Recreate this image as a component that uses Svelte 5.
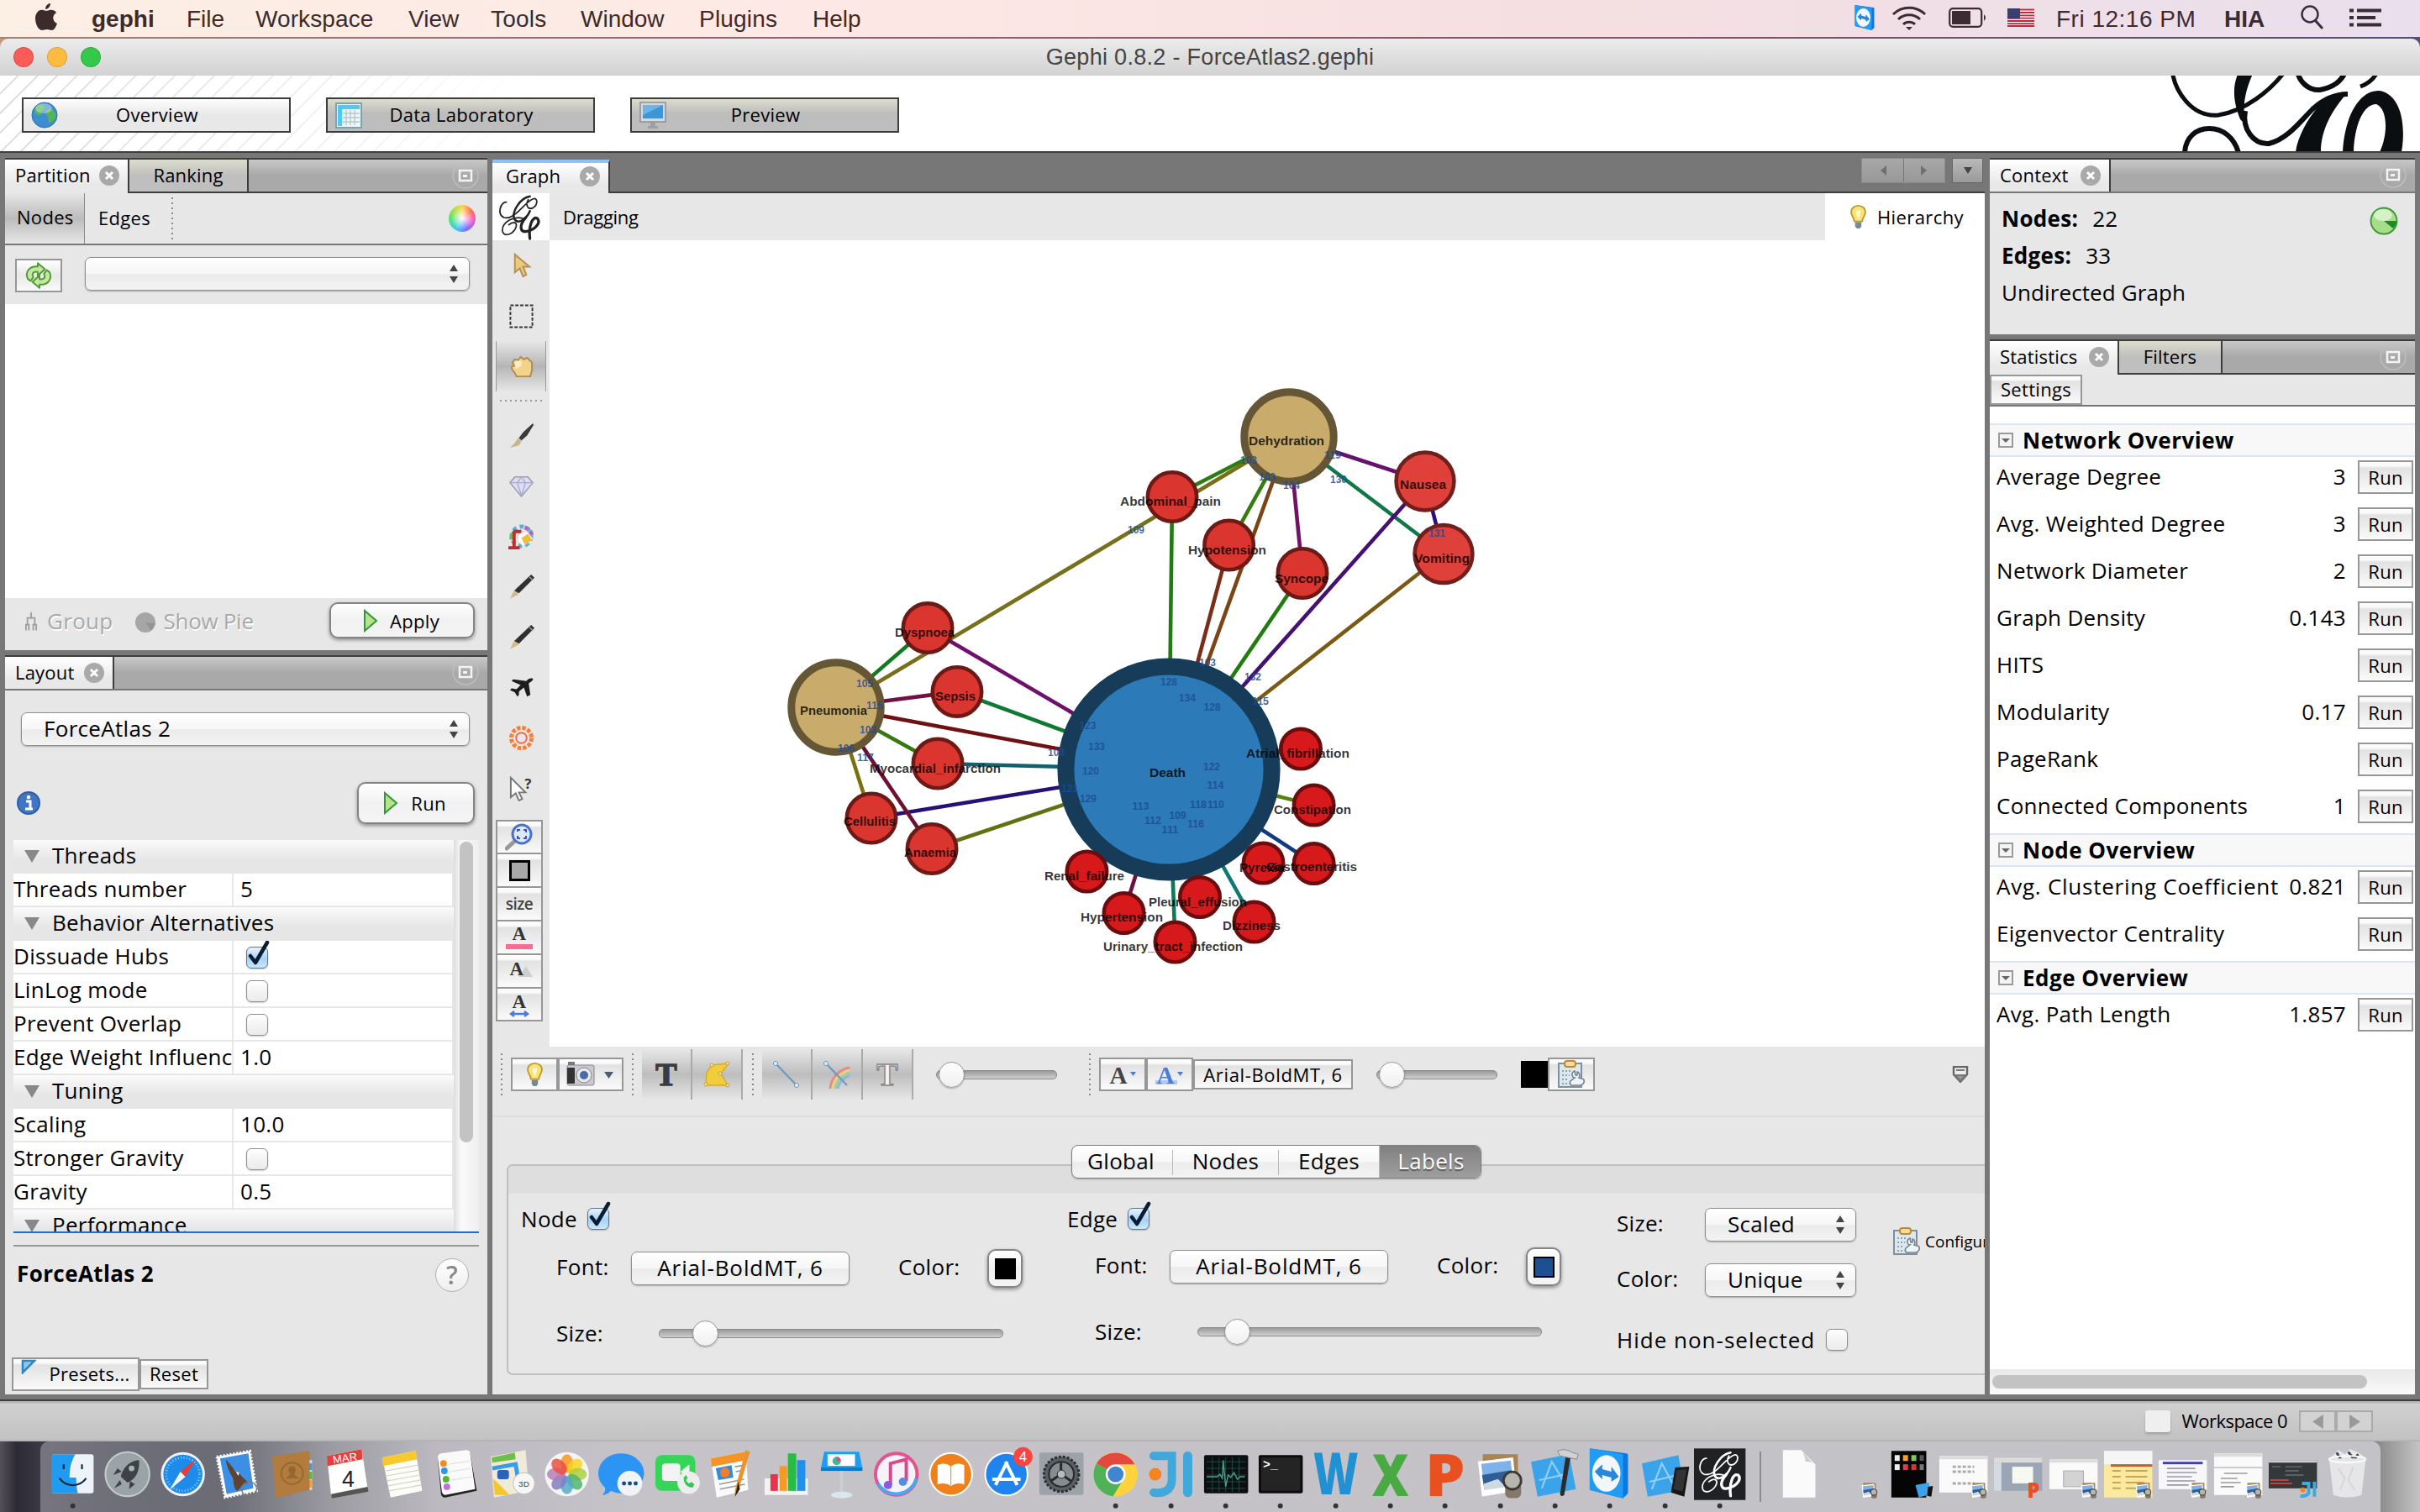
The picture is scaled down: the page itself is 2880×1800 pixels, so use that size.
<script>
  const menus = [
    ['File', 'm-file'], ['Workspace', 'm-ws'], ['View', 'm-view'], ['Tools', 'm-tools'],
    ['Window', 'm-win'], ['Plugins', 'm-plug'], ['Help', 'm-help']
  ];

  const props = [
    { head: 'Threads' },
    { name: 'Threads number', value: '5' },
    { head: 'Behavior Alternatives' },
    { name: 'Dissuade Hubs', check: true, on: true },
    { name: 'LinLog mode', check: true },
    { name: 'Prevent Overlap', check: true },
    { name: 'Edge Weight Influence', value: '1.0' },
    { head: 'Tuning' },
    { name: 'Scaling', value: '10.0' },
    { name: 'Stronger Gravity', check: true },
    { name: 'Gravity', value: '0.5' },
    { head: 'Performance' }
  ];

  const stats = [
    {
      title: 'Network Overview',
      rows: [
        ['Average Degree', '3'], ['Avg. Weighted Degree', '3'], ['Network Diameter', '2'],
        ['Graph Density', '0.143'], ['HITS', ''], ['Modularity', '0.17'],
        ['PageRank', ''], ['Connected Components', '1']
      ]
    },
    { title: 'Node Overview', rows: [['Avg. Clustering Coefficient', '0.821'], ['Eigenvector Centrality', '']] },
    { title: 'Edge Overview', rows: [['Avg. Path Length', '1.857']] }
  ];

  // kind, centre, outer radius, label text with its left/right extent and vertical middle
  const nodes = {
    death: ['blue', 1391, 916, 132.6, 'Death', 1368, 1411, 920],
    deh: ['tan', 1534, 520, 57.7, 'Dehydration', 1486, 1576, 525],
    pne: ['tan', 995, 842, 57.7, 'Pneumonia', 952, 1032, 846],
    nau: ['rose', 1696, 573, 36.7, 'Nausea', 1666, 1721, 577],
    vom: ['rose', 1718, 659.5, 36.7, 'Vomiting', 1683, 1749, 665],
    abd: ['red', 1395, 591.5, 31.5, 'Abdominal_pain', 1333, 1453, 597],
    hyp: ['red', 1462.6, 649, 31.5, 'Hypotension', 1414, 1507, 655],
    syn: ['red', 1550, 682.5, 31.5, 'Syncope', 1517, 1581, 689],
    dys: ['red', 1104, 747.6, 31.5, 'Dyspnoea', 1065, 1136, 753],
    sep: ['red', 1139, 823.4, 31.5, 'Sepsis', 1113, 1161, 829],
    myo: ['red', 1116, 909, 31.5, 'Myocardial_infarction', 1035, 1191, 915],
    cel: ['red', 1037, 974, 31.5, 'Cellulitis', 1004, 1066, 978],
    ana: ['red', 1109, 1010.5, 31.5, 'Anaemia', 1076, 1138, 1015],
    atr: ['deep', 1548, 891.5, 26, 'Atrial_fibrillation', 1483, 1606, 897],
    con: ['deep', 1563.6, 958.5, 26, 'Constipation', 1516, 1608, 964],
    pyr: ['deep', 1503.5, 1027.5, 26, 'Pyrexia', 1475, 1529, 1033],
    gas: ['deep', 1563.6, 1028, 26, 'Gastroenteritis', 1507, 1615, 1032],
    ren: ['deep', 1293.5, 1037.5, 26, 'Renal_failure', 1243, 1338, 1043],
    hpt: ['deep', 1337.5, 1087, 26, 'Hypertension', 1286, 1384, 1092],
    ple: ['deep', 1428, 1068, 26, 'Pleural_effusion', 1367, 1484, 1074],
    diz: ['deep', 1492.5, 1097.5, 26, 'Dizziness', 1455, 1524, 1102],
    uri: ['deep', 1398.5, 1121.5, 26, 'Urinary_tract_infection', 1313, 1479, 1127]
  };

  const edges = [
    ['abd', 'deh', '#2a7d12'], ['pne', 'deh', '#77701a'], ['abd', 'death', '#227a14'],
    ['hyp', 'deh', '#357d10'], ['deh', 'death', '#7a4414'], ['hyp', 'death', '#7a2c17'],
    ['syn', 'deh', '#6f1366'], ['syn', 'death', '#217c10'], ['deh', 'nau', '#66116f'],
    ['deh', 'vom', '#107848'], ['nau', 'vom', '#2c1080'], ['nau', 'death', '#461072'],
    ['vom', 'death', '#7a5a12'], ['pne', 'dys', '#127a20'], ['dys', 'death', '#6f106c'],
    ['pne', 'sep', '#701045'], ['sep', 'death', '#107a35'], ['pne', 'death', '#6f1012'],
    ['pne', 'myo', '#357a10'], ['myo', 'death', '#106070'], ['pne', 'cel', '#7a7010'],
    ['cel', 'death', '#241078'], ['pne', 'ana', '#701030'], ['ana', 'death', '#62700f'],
    ['con', 'death', '#57800f'], ['gas', 'death', '#123a80'], ['diz', 'death', '#107a70'],
    ['uri', 'death', '#107a55'], ['hpt', 'death', '#701040'], ['ren', 'death', '#127070'],
    ['ple', 'death', '#127070'], ['pyr', 'death', '#127070'], ['atr', 'death', '#127070']
  ];

  const weights = [
    ['103', 1486, 547], ['103', 1508, 567], ['104', 1537, 577], ['119', 1586, 541], ['130', 1593, 569.5],
    ['131', 1710, 634], ['109', 1352, 630], ['103', 1437, 788], ['132', 1491, 805], ['115', 1500, 834],
    ['105', 1029, 813], ['115', 1041, 839], ['103', 1033, 867.5], ['106', 1007, 889.5], ['117', 1030, 900.5],
    ['103', 1257, 894.5], ['128', 1391, 811], ['134', 1413, 830], ['128', 1442.5, 841], ['123', 1294.5, 863],
    ['133', 1305, 888], ['120', 1298, 917], ['129', 1295, 950], ['122', 1442, 911.5], ['114', 1446.5, 933.5],
    ['113', 1357.5, 959], ['118', 1426, 956.5], ['110', 1447, 956.5], ['109', 1401.5, 970], ['112', 1372, 976],
    ['116', 1423, 979.5], ['111', 1392.5, 987], ['121', 1273, 938]
  ];

  const apps = [
    'finder', 'launch', 'safari', 'mail', 'contacts', 'calendar', 'notes', 'reminders', 'maps', 'photos',
    'messages', 'facetime', 'pages', 'numbers', 'keynote', 'itunes', 'ibooks', 'appstore', 'prefs', 'chrome',
    'ji', 'activity', 'terminal', 'word', 'excel', 'ppt', 'preview', 'xcode', 'teamviewer', 'simulator', 'gephi'
  ];
  const running = new Set(['finder', 'chrome', 'ji', 'activity', 'terminal', 'word', 'excel', 'ppt', 'preview', 'xcode', 'teamviewer', 'simulator', 'gephi']);
  const shelf = ['doc', 'mini', 'black', 'win1', 'win2', 'win3', 'win4', 'win5', 'win6', 'win7', 'trash'];
  const petals = ['#f7941d', '#fbd31c', '#a9cf3a', '#4fb26b', '#4fa8c9', '#7d7fc0', '#b57ab8', '#ef4a3c'];
</script>

{#snippet logo(color)}
  <g fill="none" stroke={color} stroke-linecap="round">
    <path stroke-width="1.800" d="M14 12C7 11 2 27 11 31C24 35 36 12 47 8C53 6 53 15 47 19C41 22 37 16 41 9" />
    <path stroke-width="2.600" d="M43 5C31 7 20 24 24 33C28 40 39 33 43 23" />
    <path stroke-width="1.800" d="M37 33C24 27 9 37 9 47C10 55 20 53 25 45C29 37 23 35 17 40" />
    <path stroke-width="3.400" d="M38 31C29 41 31 50 39 48C50 46 57 37 52 32C46 29 41 42 43 57" />
  </g>
{/snippet}

{#snippet closeX()}
  <svg class="close" viewBox="0 0 24 24"><circle cx="12" cy="12" r="12" fill="#a9a9a9" /><path d="M8 8l8 8M16 8l-8 8" stroke="#fff" stroke-width="3" /></svg>
{/snippet}

{#snippet minimize()}
  <svg class="minimize" viewBox="0 0 34 34"><circle cx="17" cy="17" r="15" fill="none" stroke="#bdbdbd" stroke-width="1.5" /><rect x="10" y="11" width="14" height="12" fill="none" stroke="#f4f4f4" stroke-width="2.5" /><rect x="14" y="16" width="5" height="3" fill="#f4f4f4" /></svg>
{/snippet}

{#snippet arrows()}
  <svg class="arrows" viewBox="0 0 10 22"><path d="M0 8L5 0l5 8zM0 14h10l-5 8z" fill="#444" /></svg>
{/snippet}

{#snippet play()}
  <svg class="play" viewBox="0 0 18 28"><path d="M2 2v24L16 14z" fill="#b9e08a" stroke="#2f9a35" stroke-width="2" /></svg>
{/snippet}

{#snippet check(on)}
  <span class="check" class:on>
    {#if on}<svg viewBox="0 0 34 36"><path d="M7 19l6 8L27 3" fill="none" stroke="#0a1d33" stroke-width="4.5" stroke-linecap="round" stroke-linejoin="round" /></svg>{/if}
  </span>
{/snippet}

{#snippet bulb()}
  <svg class="bulb" viewBox="0 0 24 32"><path d="M12 2c-6 0-9 4-9 8 0 5 4 7 4 12h10c0-5 4-7 4-12 0-4-3-8-9-8z" fill="#f6e37a" stroke="#c09a30" stroke-width="2" /><path d="M9 8c0 6 2 8 3 12 1-4 3-6 3-12z" fill="#fff8c8" /><path d="M8 23h8v5l-2 3h-4l-2-3z" fill="#7d8794" /></svg>
{/snippet}

{#snippet clip()}
  <svg class="clip" viewBox="0 0 34 34"><rect x="2" y="4" width="27" height="28" fill="#dce8ef" stroke="#7f8f9b" stroke-width="2" /><rect x="9" y="1" width="13" height="7" rx="3" fill="#f7dca0" stroke="#c18a2c" stroke-width="2" /><path d="M6 13h12M6 18h9M6 23h7M6 28h6" stroke="#7a8b98" stroke-width="1.6" stroke-dasharray="2 2" /><path d="M21 13c-5 2-3 8 0 8l-5 4c-2 4 1 6 4 5h8c6-2 5-8 1-8l-3-1c2-3 0-7-2-7v4h-2z" fill="#f0f4f7" stroke="#75848f" stroke-width="1.6" /></svg>
{/snippet}

{#snippet globe()}
  <circle cx="17" cy="17" r="15" fill="#3b8ed0" stroke="#2b6fae" /><path d="M8 6c5-3 8-2 9 1s-4 4-4 8-5 2-7 0 0-7 2-9zM20 11c4-3 8 0 10 4s-2 10-6 11-2-6-4-8-3-5 0-7z" fill="#54b45c" /><ellipse cx="16" cy="9" rx="10" ry="6" fill="#fff" opacity=".35" />
{/snippet}

{#snippet photo(x, y, s)}
  <g transform="translate({x} {y}) scale({s})">
    <rect x="6" y="1" width="44" height="40" fill="#a98454" /><path d="M0 10L44 5l4 42L5 54z" fill="#fff" /><path d="M4 13l37-4 3 30L8 45z" fill="#7fb2e8" /><path d="M5 27l37-6 2 18L8 45z" fill="#2f5f96" /><path d="M7 38l18-6 10 10-27 4z" fill="#cfd9e0" />
    <rect x="34" y="36" width="20" height="20" rx="6" fill="#85786a" /><circle cx="43" cy="34" r="11" fill="#b8b4ae" stroke="#3c3a38" stroke-width="3" />
  </g>
{/snippet}

{#snippet teamviewer()}
  <path d="M8 6l44 6c2 0 2 2 2 4v44l-6 6L8 56z" fill="#0a78e0" /><path d="M8 6l40 7v53L8 56z" fill="#1e9cf6" /><ellipse cx="28" cy="36" rx="17" ry="22" fill="#f4f7fa" /><path d="M14 34l9-9v6l11 3v-6l9 12-9 6v-5l-11-3v5z" fill="#2a86d8" />
{/snippet}

<div class="screen">
  <header class="menubar">
    <svg class="apple" viewBox="0 0 26 32"><path d="M18 0c0 4-3 7-6 7 0-4 3-7 6-7zM13 9c2 0 4-2 7-1 2 0 4 1 5 3-6 4-4 11 1 13-2 5-4 8-6 8-3 0-4-1-6-1s-4 1-6 1C4 32 0 25 0 18 0 10 6 7 9 8c2 0 3 1 4 1z" fill="#3d2b2b" /></svg>
    <b class="m-gephi">gephi</b>
    {#each menus as [label, cls]}<span class={cls}>{label}</span>{/each}
    <span class="grow"></span>
    <svg class="tv" viewBox="4 4 52 64">{@render teamviewer()}</svg>
    <svg class="wifi" viewBox="0 0 42 30"><g fill="none" stroke="#3d2b33" stroke-width="3"><path d="M2 11a27 27 0 0 1 38 0M8 17a19 19 0 0 1 26 0M14 23a10 10 0 0 1 14 0" /></g><path d="M17 26h8l-4 4z" fill="#3d2b33" /></svg>
    <svg class="battery" viewBox="0 0 46 24"><rect x="1.2" y="1.2" width="38" height="21.6" rx="4" fill="none" stroke="#3d2b33" stroke-width="2.2" /><rect x="4" y="4" width="22" height="16" fill="#3d2b33" /><path d="M42 8q4 4 0 8z" fill="#3d2b33" /></svg>
    <svg class="flag" viewBox="0 0 32 22"><rect width="32" height="22" fill="#fff" /><path d="M0 1.5h32M0 5h32M0 8.3h32M0 11.6h32M0 15h32M0 18.2h32M0 21h32" stroke="#c0283a" stroke-width="1.8" /><rect width="15" height="12.5" fill="#39406f" /></svg>
    <span class="clock">Fri 12:16 PM</span>
    <b class="user">HIA</b>
    <svg class="find" viewBox="0 0 30 30"><circle cx="12" cy="11" r="9.5" fill="none" stroke="#3d2b33" stroke-width="2.4" /><path d="M18 18l9 10" stroke="#3d2b33" stroke-width="3" /></svg>
    <svg class="list" viewBox="0 0 38 22"><path d="M0 2.5h5M0 11h5M0 19.5h5M9 2.5h29M9 11h22M9 19.5h29" stroke="#3d2b33" stroke-width="4" /></svg>
  </header>

  <div class="titlewrap"><div class="titlebar">
    <div class="lights"><i class="r"></i><i class="y"></i><i class="g"></i></div>
    <span>Gephi 0.8.2 - ForceAtlas2.gephi</span>
  </div></div>

  <div class="banner">
    <button class="view current"><svg viewBox="0 0 34 34">{@render globe()}</svg><span>Overview</span></button>
    <button class="view"><svg viewBox="0 0 34 34"><rect x="2" y="3" width="30" height="29" fill="#eaf6f8" stroke="#7fa3a8" stroke-width="2" /><path d="M4 5h26v5H9v20H4z" fill="#4fc8f4" /><path d="M14 11v18M19 11v18M24 11v18M10 15h20M10 20h20M10 25h20" stroke="#b9c8cb" stroke-width="1.4" /></svg><span>Data Laboratory</span></button>
    <button class="view"><svg viewBox="0 0 34 34"><rect x="2" y="2" width="30" height="23" fill="#d6d9dd" stroke="#8a8f96" stroke-width="1.5" /><rect x="5" y="5" width="24" height="16" fill="#3f94d6" /><path d="M5 5h24L5 17z" fill="#6db4ea" /><path d="M14 26h6v4h3v3H11v-3h3z" fill="#9aa0a6" /></svg><span>Preview</span></button>
    <span class="grow"></span>
    <svg class="bigmark" viewBox="2576 90 304 90">
      <g fill="none" stroke="#0a0e10" stroke-width="6">
        <path d="M2585 84C2588 108 2608 140 2640 137C2672 132 2702 108 2720 84" stroke-width="5" />
        <path d="M2600 182C2601 163 2614 153 2629 153C2646 153 2659 164 2664 182" stroke-width="6" />
        <path d="M2734 84C2736 98 2748 108 2761 107C2776 104 2786 98 2792 84" stroke-width="6" />
        <path d="M2829 86Q2823 98 2809 103" stroke-width="5" />
        <path d="M2672 132C2668 154 2682 172 2700 171C2722 166 2738 144 2752 130C2764 119 2778 112 2794 112" stroke-width="6" />
      </g>
      <path d="M2664 86h18C2672 106 2668 128 2672 148L2666 142C2658 122 2656 104 2664 86zM2794 110C2774 132 2762 156 2762 181H2732C2734 164 2746 142 2758 128C2768 118 2780 112 2794 110z" fill="#0a0e10" />
      <path d="M2788 181C2790 142 2806 107 2832 108C2856 112 2864 146 2858 181H2832C2842 160 2842 130 2828 124C2812 124 2802 150 2801 181z" fill="#0a0e10" />
    </svg>
  </div>

  <main class="work">
    <div class="col left">
      <section class="panel p1">
        <div class="strip">
          <div class="tab active">Partition{@render closeX()}</div>
          <div class="tab rank">Ranking</div>
          <div class="fill">{@render minimize()}</div>
        </div>
        <div class="subtabs">
          <span class="sel">Nodes</span><span class="ed">Edges</span><i class="vdots"></i><span class="grow"></span><i class="wheel"></i>
        </div>
        <div class="pick">
          <button class="sq"><svg viewBox="0 0 32 32"><g fill="#c3e6a0" stroke="#4f9a33" stroke-width="1.800" stroke-linejoin="round"><path d="M4 20C0 12 6 5 15 6l0-4 8 7-8 7v-4c-5-1-7 2-5 6l-3 4z" /><path d="M28 12c4 8-2 15-11 14v4l-8-7 8-7v4c5 1 7-2 5-6l3-4z" /></g></svg></button>
          <div class="combo">{@render arrows()}</div>
        </div>
        <div class="blank"></div>
        <div class="foot">
          <svg class="tree" viewBox="0 0 16 26"><path d="M8 0v8M3 16V8h10v8M1 25v-8h4v8M11 25v-8h4v8" fill="none" stroke="#9c9c9c" stroke-width="2" /></svg>
          <span class="dis">Group</span>
          <svg class="piegray" viewBox="0 0 24 24"><circle cx="12" cy="12" r="12" fill="#a6a6a6" /><path d="M12 12l12 1-5 9z" fill="#949494" /></svg>
          <span class="dis pietext">Show Pie</span>
          <button class="mac apply">{@render play()}Apply</button>
        </div>
      </section>

      <section class="panel p2">
        <div class="strip plain">
          <div class="tab active">Layout{@render closeX()}</div>
          <div class="fill">{@render minimize()}</div>
        </div>
        <div class="combo algo"><span>ForceAtlas 2</span>{@render arrows()}</div>
        <div class="runrow">
          <svg class="info" viewBox="0 0 28 28"><circle cx="14" cy="14" r="13" fill="#3f77c4" stroke="#2b5da8" stroke-width="2" /><path d="M11 12h5v9M10 21h9" stroke="#fff" stroke-width="3" fill="none" /><circle cx="14" cy="7" r="2.2" fill="#fff" /></svg>
          <button class="mac run">{@render play()}Run</button>
        </div>
        <div class="props">
          <div class="table">
            {#each props as p}
              {#if p.head}
                <div class="phead"><i></i>{p.head}</div>
              {:else}
                <div class="prow"><span>{p.name}</span><span class="val">{#if p.check}{@render check(p.on)}{:else}{p.value}{/if}</span></div>
              {/if}
            {/each}
          </div>
          <div class="vscroll"><i></i></div>
        </div>
        <div class="desc"><b>ForceAtlas 2</b><span class="help">?</span></div>
        <div class="presets">
          <button class="flat pre"><svg viewBox="0 0 18 18"><path d="M2 2h14L2 16z" fill="#8ec7ec" stroke="#2a87c2" stroke-width="2.5" /></svg>Presets...</button>
          <button class="flat reset">Reset</button>
        </div>
      </section>
    </div>

    <section class="graph">
      <div class="gtabs">
        <div class="tab active gtab">Graph{@render closeX()}</div>
        <div class="gfill">
          <div class="nav"><i><svg viewBox="0 0 12 16"><path d="M10 2v12L3 8z" fill="#707070" /></svg></i><i><svg viewBox="0 0 12 16"><path d="M2 2v12l7-6z" fill="#707070" /></svg></i></div>
          <div class="drop"><svg viewBox="0 0 12 16"><path d="M1 4h10L6 12z" fill="#444" /></svg></div>
        </div>
      </div>
      <div class="modebar">
        <svg class="mark" viewBox="3 1 58 58">{@render logo('#222')}</svg>
        <span class="drag">Dragging</span>
        <span class="hier">{@render bulb()}Hierarchy</span>
      </div>
      <div class="stage">
        <div class="tools">
          <div class="tool"><svg viewBox="0 0 32 32"><path d="M8 2v22l6-5 4 10 4-2-4-10h8z" fill="#eecb7a" stroke="#b3905a" stroke-width="2" /></svg></div>
          <div class="tool"><svg viewBox="0 0 32 32"><rect x="2.5" y="2.5" width="27" height="27" fill="none" stroke="#333" stroke-width="2" stroke-dasharray="4 2" /></svg></div>
          <div class="tool held"><svg viewBox="0 0 32 32"><path d="M10 28C9 23 3 20 4 16l3-1-2-4 3-4 4 1 3-4 4 3 4-2 3 3 3 3v9l-2 8z" fill="#f1d489" stroke="#b08b55" stroke-width="2" /><path d="M8 9l8 0 0 6-7 4z" fill="#fdf3d4" opacity=".8" /></svg></div>
          <i class="hdots"></i>
          <div class="tool"><svg viewBox="0 0 32 32"><path d="M30 1L18 12l-6 8 3 3 8-7L31 3z" fill="#3a3a3a" /><path d="M12 19l4 4-3 5-11 3 5-5z" fill="#c9b587" /><path d="M12 20l3 3" stroke="#bbb" stroke-width="3" /></svg></div>
          <div class="tool"><svg viewBox="0 0 32 32"><path d="M8 5h16l6 7-14 17L2 12z" fill="#dcdcf3" stroke="#9c9cbb" stroke-width="1.6" /><path d="M2 12h28M11 12l5 16 5-16-5-7z" fill="none" stroke="#a9a9c8" stroke-width="1.4" /></svg></div>
          <div class="tool"><svg viewBox="0 0 32 32"><circle cx="16" cy="16" r="12" fill="none" stroke="#5bb0d8" stroke-width="5" stroke-dasharray="5 4" /><path d="M4 20a12 12 0 0 1 3-9" stroke="#5cc65c" stroke-width="5" fill="none" /><path d="M20 5a12 12 0 0 1 9 10" stroke="#b763c6" stroke-width="5" fill="none" stroke-dasharray="5 3" /><path d="M6 10h10M7 10v20M0 30h14" stroke="#c62a2a" stroke-width="4" /><path d="M12 14l10-5 8 10-12 9-7-7z" fill="#fff" stroke="#ccc" /><path d="M16 18l8-5 5 7-9 6z" fill="#ecbe3c" /></svg></div>
          <div class="tool"><svg viewBox="0 0 32 32"><path d="M28 1l4 4L13 24 7 21z" fill="#303030" /><path d="M7 20l6 5-11 6z" fill="#d2b98a" /><path d="M26 4l4 4" stroke="#999" stroke-width="1.5" /></svg></div>
          <div class="tool"><svg viewBox="0 0 32 32"><path d="M28 1l4 4L13 24 7 21z" fill="#303030" /><path d="M7 20l6 5-11 6z" fill="#d2b98a" /><path d="M26 4l4 4" stroke="#999" stroke-width="1.5" /></svg></div>
          <div class="tool"><svg viewBox="0 0 32 32"><path d="M30 5c-3-1-5 0-8 3L6 6 4 8l11 5-5 5-6-1-2 2 6 3 3 5 2-2v-4l6-5 4 11 4-2-2-14c4-3 6-4 5-6z" fill="#1c1c1c" /></svg></div>
          <div class="tool"><svg viewBox="0 0 32 32"><circle cx="16" cy="16" r="12.5" fill="none" stroke="#f2803a" stroke-width="5" stroke-dasharray="4.6 2" /><circle cx="16" cy="16" r="6.5" fill="none" stroke="#f2694a" stroke-width="2" /></svg></div>
          <div class="tool"><svg viewBox="0 0 32 32"><path d="M3 3v24l6-5 4 9 4-2-4-8h8z" fill="#fff" stroke="#777" stroke-width="2" /><text x="20" y="16" class="qm">?</text></svg></div>
          <div class="boxes">
            <button class="flat"><svg viewBox="0 0 34 34"><path d="M13 20L2 30" stroke="#999" stroke-width="5" stroke-linecap="round" /><circle cx="20" cy="13" r="11" fill="#dfe9fb" stroke="#4a74c9" stroke-width="3" /><path d="M15 10V8h3M22 8h3v3M25 15v3h-3M18 18h-3v-3" stroke="#3358b5" stroke-width="2" fill="none" /></svg></button>
            <button class="flat"><i class="swatchg"></i></button>
            <button class="flat"><span class="sizeb">size</span></button>
            <button class="flat"><svg viewBox="0 0 34 34"><text x="17" y="20" text-anchor="middle" class="serifA">A</text><rect x="1" y="25" width="32" height="6" fill="#fb6b93" /></svg></button>
            <button class="flat"><svg viewBox="0 0 34 34"><path d="M16 24l9-13 8 13z" fill="#cfcfcf" /><text x="14" y="22" text-anchor="middle" class="serifA">A</text></svg></button>
            <button class="flat"><svg viewBox="0 0 34 34"><text x="17" y="21" text-anchor="middle" class="serifA">A</text><path d="M8 28h18M11 25l-4 3 4 3M23 25l4 3-4 3" stroke="#4b7cd6" stroke-width="2.4" fill="none" /></svg></button>
          </div>
        </div>
        <svg class="canvas" viewBox="654 286 1708 960">
          {#each edges as [a, b, color]}
            <line x1={nodes[a][1]} y1={nodes[a][2]} x2={nodes[b][1]} y2={nodes[b][2]} stroke={color} stroke-width="4.6" />
          {/each}
          {#each Object.values(nodes) as [kind, x, y, r]}
            <circle class={kind} cx={x} cy={y} r={kind === 'blue' ? r - 10 : kind === 'tan' ? r - 4.5 : r - 2.3} />
          {/each}
          {#each weights as [t, x, y]}
            <text class="weight" x={x - 10} y={y + 5} textLength="20" lengthAdjust="spacingAndGlyphs">{t}</text>
          {/each}
          {#each Object.values(nodes) as [, , , , t, x1, x2, y]}
            <text class="label" x={x1} y={y + 5} textLength={x2 - x1} lengthAdjust="spacingAndGlyphs">{t}</text>
          {/each}
        </svg>
      </div>

      <div class="bottombar">
        <i class="vdots d1"></i>
        <button class="flat b56">{@render bulb()}</button>
        <button class="flat cam"><svg viewBox="0 0 60 34"><rect x="2" y="6" width="32" height="24" rx="2" fill="#c8cad0" stroke="#85888f" /><rect x="2" y="9" width="9" height="19" fill="#333" /><rect x="3" y="2" width="8" height="4" fill="#777" /><circle cx="22" cy="18" r="9" fill="#e6e8ee" stroke="#888" /><circle cx="22" cy="18" r="5" fill="#4a6aa8" /><path d="M46 14h11l-5.500 8z" fill="#4a5c70" /></svg></button>
        <i class="vdots d2"></i>
        <span class="tog"><svg viewBox="0 0 34 34"><text x="17" y="30" text-anchor="middle" class="bigT dark">T</text></svg></span>
        <span class="tog"><svg viewBox="0 0 34 34"><path d="M11 6l20-2-9 12 8 14H4l1-15z" fill="#f1cd3d" stroke="#d3ab36" stroke-width="1.5" /><g fill="#fbe9a0" stroke="#c99c2b"><circle cx="11" cy="6" r="2" /><circle cx="30" cy="4" r="2" /><circle cx="4" cy="29" r="2" /><circle cx="30" cy="30" r="2" /><circle cx="21" cy="16" r="2" /></g></svg></span>
        <i class="vdots d3"></i>
        <span class="tog"><svg viewBox="0 0 34 34"><path d="M4 4l25 26" stroke="#6f9cc0" stroke-width="2.4" /><circle cx="4" cy="4" r="2.600" fill="#dcecf6" stroke="#6f9cc0" /><circle cx="29" cy="30" r="2.600" fill="#dcecf6" stroke="#6f9cc0" /></svg></span>
        <span class="tog"><svg viewBox="0 0 34 34"><g fill="none" stroke-width="3"><path d="M9 34C10 22 18 12 32 9" stroke="#e58a86" /><path d="M12 34C13 24 20 16 32 12" stroke="#ecd08a" /><path d="M15 34C16 26 22 19 32 15" stroke="#a0cf9a" /><path d="M18 34C19 28 24 22 32 18" stroke="#8cb5e0" /></g><path d="M4 4l25 26" stroke="#6f9cc0" stroke-width="2.4" /><circle cx="4" cy="4" r="2.600" fill="#dcecf6" stroke="#6f9cc0" /></svg></span>
        <span class="tog"><svg viewBox="0 0 34 34"><text x="17" y="30" text-anchor="middle" class="bigT light">T</text></svg></span>
        <div class="slider s1"><i></i></div>
        <i class="vdots d4"></i>
        <button class="flat b56"><svg viewBox="0 0 40 34"><text x="15" y="28" text-anchor="middle" class="dropA">A</text><path d="M29 14h7l-3.500 5z" fill="#4b7cd6" /></svg></button>
        <button class="flat b56"><svg viewBox="0 0 40 34"><rect x="3" y="24" width="26" height="5" fill="#b3c8f0" /><text x="15" y="28" text-anchor="middle" class="dropA blue2">A</text><path d="M29 14h7l-3.500 5z" fill="#4b7cd6" /></svg></button>
        <button class="flat fontb">Arial-BoldMT, 6</button>
        <div class="slider s2"><i></i></div>
        <i class="black"></i>
        <button class="flat b56">{@render clip()}</button>
        <span class="grow"></span>
        <svg class="pen" viewBox="0 0 20 20"><path d="M2 1h16v9l-8 9-8-9z" fill="#eee" stroke="#666" stroke-width="2.4" /><path d="M5 5h10M4 11h12l-6 7z" stroke="#777" stroke-width="2" fill="#999" /></svg>
      </div>

      <div class="labels">
        <div class="seg"><span>Global</span><span>Nodes</span><span>Edges</span><span class="on">Labels</span></div>
        <div class="group">
          <div class="half node">
            <div class="toggle">Node{@render check(true)}</div>
            <div class="frow"><span class="k">Font:</span><button class="mac2">Arial-BoldMT, 6</button><span class="k2">Color:</span><button class="mac sw"><i></i></button></div>
            <div class="srow"><span class="k">Size:</span><div class="slider long"><i></i></div></div>
          </div>
          <div class="half edge">
            <div class="toggle">Edge{@render check(true)}</div>
            <div class="frow"><span class="k">Font:</span><button class="mac2">Arial-BoldMT, 6</button><span class="k2">Color:</span><button class="mac sw"><i class="navy"></i></button></div>
            <div class="srow"><span class="k">Size:</span><div class="slider long lo2"><i></i></div></div>
          </div>
          <div class="opts">
            <div class="orow"><span>Size:</span><div class="combo sm"><span>Scaled</span>{@render arrows()}</div></div>
            <div class="orow o2"><span>Color:</span><div class="combo sm"><span>Unique</span>{@render arrows()}</div></div>
            <div class="hide">Hide non-selected{@render check(false)}</div>
          </div>
          <div class="conf">{@render clip()}<span>Configure</span></div>
        </div>
      </div>
    </section>

    <div class="col right">
      <section class="panel p3">
        <div class="strip plain">
          <div class="tab active ctx">Context{@render closeX()}</div>
          <div class="fill">{@render minimize()}</div>
        </div>
        <div class="context">
          <dl>
            <div><dt>Nodes:</dt><dd>22</dd></div>
            <div><dt>Edges:</dt><dd>33</dd></div>
            <div>Undirected Graph</div>
          </dl>
          <svg class="pie" viewBox="0 0 34 34"><circle cx="17" cy="17" r="15.500" fill="#a7dd8b" stroke="#3f9a35" stroke-width="2" /><ellipse cx="16" cy="10" rx="11" ry="7" fill="#e2f6d6" opacity=".8" /><path d="M17 17h15c0 4-2 7-4 9z" fill="#1f8a26" /></svg>
        </div>
      </section>
      <section class="panel p4">
        <div class="strip">
          <div class="tab active st">Statistics{@render closeX()}</div>
          <div class="tab filt">Filters</div>
          <div class="fill">{@render minimize()}</div>
        </div>
        <div class="setrow"><button class="flat">Settings</button></div>
        <div class="stats">
          {#each stats as s}
            <div class="shead"><svg viewBox="0 0 18 18"><rect x="1" y="1" width="16" height="16" fill="#f4f4f4" stroke="#9a9a9a" stroke-width="2" /><path d="M4 7h10l-5 5z" fill="#666" /></svg>{s.title}</div>
            <div class="slist">
              {#each s.rows as [name, value]}
                <div class="srow2"><span class:wide={name.length > 24}>{name}</span><span class="v">{value}</span><button class="flat">Run</button></div>
              {/each}
            </div>
          {/each}
        </div>
        <div class="hscroll"><i></i></div>
      </section>
    </div>
  </main>

  <footer class="status">
    <i class="sheet"></i><span>Workspace 0</span>
    <div class="wnav"><i><svg viewBox="0 0 12 16"><path d="M12 0v16L0 8z" fill="#999" /></svg></i><i><svg viewBox="0 0 12 16"><path d="M0 0v16l12-8z" fill="#999" /></svg></i></div>
  </footer>

  <div class="desktop">
    <div class="dock">
      {#each apps as a}
        <svg class="app" viewBox="0 0 66 84">
          {#if a === 'finder'}
            <rect x="8" y="15" width="50" height="47" rx="3" fill="#eef3f9" /><path d="M11 15h25c-6 10-7 20-7 28h8c0 8 1 14 2 19H11q-3 0-3-3V18q0-3 3-3z" fill="#1f9bf2" /><path d="M22 27v6M44 27v6M17 44c8 11 24 11 32 0" fill="none" stroke="#12263d" stroke-width="2.200" />
          {:else if a === 'launch'}
            <circle cx="33" cy="39" r="26.500" fill="#9aa4a6" stroke="#c6cdcf" stroke-width="2" /><path d="M47 22c-14 1-20 12-22 20l8 7c10-4 15-14 14-27zM26 36l-10 4 5-8zM36 47l-1 10 7-6zM24 46l-7 10 9-5z" fill="#3c4245" /><circle cx="38" cy="32" r="3.500" fill="#a9b2b4" />
          {:else if a === 'safari'}
            <circle cx="33" cy="39" r="26.500" fill="#eef2f5" /><circle cx="33" cy="39" r="23.500" fill="#1c8bea" /><circle cx="33" cy="39" r="20" fill="none" stroke="#8fd0fa" stroke-width="3" stroke-dasharray="1 2.500" /><path d="M49 20L30 36l6 6z" fill="#ea3b3b" /><path d="M17 58l19-16-6-6z" fill="#f4f4f4" />
          {:else if a === 'mail'}
            <path d="M8 18l40-7 8 48-38 8z" fill="#fff" stroke="#fff" stroke-width="3" stroke-dasharray="2 2" /><path d="M12 20l34-6 6 42-32 7z" fill="#3d8fe3" /><path d="M19 21c5 6 9 10 11 15l4 1c3 3 6 7 12 12l-5 2c-4 1-5 7-9 8-3-3-4-9-4-14-4-8-8-14-9-24z" fill="#5c4333" /><path d="M31 36l4 1-1 4z" fill="#fff" /><circle cx="47" cy="57" r="9" fill="none" stroke="#777" stroke-width="1.500" />
          {:else if a === 'contacts'}
            <rect x="46" y="22" width="11" height="36" fill="#d9d9d9" /><path d="M50 26h7v8h-7z" fill="#3a9be8" /><path d="M50 36h7v9h-7z" fill="#4dbf52" /><path d="M50 46h7v9h-7z" fill="#f2a33a" /><path d="M9 18l42-7q3 0 3 3v44l-38 9q-3 0-3-4z" fill="#b27c3e" /><circle cx="33" cy="38" r="13" fill="none" stroke="#966831" stroke-width="2" /><path d="M33 29c6 0 5 8 2 10l6 5H25l6-5c-3-2-4-10 2-10z" fill="#966831" />
          {:else if a === 'calendar'}
            <path d="M8 18l42-8 8 50-44 8z" fill="#555" /><path d="M8 17l42-8 7 45-44 9z" fill="#fff" /><path d="M8 17l42-8 1 12-42 8z" fill="#e2403c" /><text x="30" y="24" text-anchor="middle" class="mar" transform="rotate(-8 30 20)">MAR</text><text x="34" y="54" text-anchor="middle" class="four">4</text>
          {:else if a === 'notes'}
            <path d="M9 19l40-8 8 48-38 8z" fill="#fdfdfa" /><path d="M9 19l40-8 2 10-41 8z" fill="#f8c92c" /><path d="M13 35l39-7M14 41l39-7M15 47l39-7M16 53l39-7M17 59l39-7" stroke="#d6d3c8" stroke-width="1.200" />
          {:else if a === 'reminders'}
            <path d="M10 20q0-4 4-5l30-4q5 0 5 4l8 44-38 8q-4 0-5-4z" fill="#222" /><path d="M10 19q0-4 4-5l30-4q5 0 5 4l6 43-36 7q-3 0-4-4z" fill="#fafafa" /><circle cx="17" cy="26" r="4" fill="#f58a20" /><circle cx="18" cy="35" r="4" fill="#2b98ee" /><circle cx="20" cy="45" r="4" fill="#52b82e" /><circle cx="21" cy="54" r="4" fill="#c26de0" /><path d="M24 27l24-4M25 36l24-4M27 46l24-4" stroke="#ddd" />
          {:else if a === 'maps'}
            <path d="M7 18l42-8 4 49-42 8z" fill="#f0ead9" /><path d="M8 19l28-6 1 8-28 4z" fill="#6fbf4b" /><path d="M9 32l28-5 5 30" fill="none" stroke="#3b9be8" stroke-width="5" /><path d="M10 44l20 20h-18z" fill="#f6c62e" /><rect x="15" y="34" width="14" height="11" rx="3" fill="#2c62b8" /><circle cx="47" cy="50" r="13" fill="#f7f7f7" stroke="#bbb" /><text x="47" y="54" text-anchor="middle" class="tiny">3D</text>
          {:else if a === 'photos'}
            <circle cx="33" cy="39" r="26.500" fill="#f5f5f5" />{#each petals as c, i}<ellipse cx="33" cy="26" rx="7.500" ry="11" fill={c} opacity=".82" transform="rotate({i * 45} 33 39)" />{/each}
          {:else if a === 'messages'}
            <path d="M32 14a27 24 0 1 1-12 45c-2 3-6 5-10 5 3-3 4-6 3-9A27 24 0 0 1 32 14z" fill="#2b94f5" /><circle cx="43" cy="50" r="15" fill="#f0f4f8" /><g fill="#1b4c80"><circle cx="36" cy="50" r="2.500" /><circle cx="43" cy="50" r="2.500" /><circle cx="50" cy="50" r="2.500" /></g>
          {:else if a === 'facetime'}
            <rect x="7" y="16" width="48" height="43" rx="8" fill="#35d657" /><rect x="15" y="26" width="22" height="21" rx="4" fill="#f3f3f3" /><path d="M37 36l11-9v20z" fill="#f3f3f3" /><circle cx="47" cy="49" r="13.500" fill="#eee" /><path d="M41 43c0 8 5 12 11 12l2-4-4-3-2 2c-3-1-4-3-4-5l2-1-2-4z" fill="#35c653" />
          {:else if a === 'pages'}
            <path d="M8 20l42-8 3 46-38 9z" fill="#fbfbfb" /><path d="M8 20l42-8 1 10-42 8z" fill="#f59327" /><path d="M14 32l19-4 2 15-18 3z" fill="#2f8bdc" /><circle cx="25" cy="37" r="6" fill="#ee7d34" /><path d="M37 30l12-2M38 36l11-2M18 51l30-6M19 57l30-6" stroke="#999" stroke-width="1.600" /><path d="M50 10l5 2-14 48-4 6 0-8z" fill="#e8942f" /><path d="M41 48l-4 18 6-9z" fill="#222" />
          {:else if a === 'numbers'}
            <path d="M7 44h52v20H7z" fill="#f3f3f3" /><rect x="14" y="39" width="9" height="20" fill="#e8344c" /><rect x="25" y="29" width="9" height="30" fill="#f59a26" /><rect x="35" y="14" width="10" height="45" fill="#27bd45" /><rect x="46" y="22" width="10" height="37" fill="#1f8ff0" />
          {:else if a === 'keynote'}
            <path d="M12 12h42l4 20H8z" fill="#1f9df0" /><rect x="16" y="15" width="33" height="14" fill="#fafafa" /><circle cx="27" cy="23" r="5" fill="#39bd8d" /><path d="M27 23v-5a5 5 0 0 1 5 5z" fill="#e5438a" /><rect x="8" y="31" width="50" height="4" fill="#0c7ac6" /><rect x="31" y="35" width="3.500" height="26" fill="#c8d0d6" /><ellipse cx="33" cy="64" rx="13" ry="4" fill="#d9e6ee" />
          {:else if a === 'itunes'}
            <circle cx="33" cy="39" r="25" fill="#f5f3f7" stroke="#e3538f" stroke-width="4" /><path d="M11 50A25 25 0 0 0 57 44" fill="none" stroke="#49a8f0" stroke-width="4" /><path d="M26 52V26l19-5v26" fill="none" stroke="#d9488c" stroke-width="4" /><circle cx="23" cy="52" r="5" fill="#8a5be0" /><circle cx="41" cy="48" r="5" fill="#5b8be0" />
          {:else if a === 'ibooks'}
            <circle cx="33" cy="39" r="26.500" fill="#fff" /><circle cx="33" cy="39" r="24.500" fill="#f0801c" /><path d="M33 30c-5-5-11-4-16-2v23c6-2 12-1 16 2 4-3 10-4 16-2V28c-5-2-11-3-16 2z" fill="#fff" /><path d="M33 30v22" stroke="#f0801c" />
          {:else if a === 'appstore'}
            <circle cx="33" cy="39" r="26.500" fill="#fff" /><circle cx="33" cy="39" r="24.500" fill="#1f84ee" /><path d="M34 24L20 52M32 24l14 28M16 45h34" stroke="#fff" stroke-width="4" fill="none" /><circle cx="53" cy="18" r="11.500" fill="#f8453f" /><text x="53" y="24" text-anchor="middle" class="badge">4</text>
          {:else if a === 'prefs'}
            <rect x="7" y="13" width="53" height="51" rx="2" fill="#9ba2a8" /><circle cx="33.500" cy="39" r="21" fill="#5b5f63" stroke="#2b2d2f" stroke-width="3" stroke-dasharray="3 2" /><circle cx="33.500" cy="39" r="15" fill="#878c90" stroke="#26282a" stroke-width="2" /><path d="M33 39V25M33 39l12 8M33 39l-12 8" stroke="#26282a" stroke-width="3" /><circle cx="33.500" cy="39" r="5" fill="#b7bbbe" stroke="#26282a" />
          {:else if a === 'chrome'}
            <circle cx="33" cy="39" r="26.500" fill="#ffd23e" /><path d="M33 39L10 26A26.500 26.500 0 0 1 56 27H33z" fill="#e24a3d" /><path d="M33 39L10 26a26.500 26.500 0 0 0 20 39.500l12-20z" fill="#4fb257" /><circle cx="33" cy="39" r="12" fill="#fff" /><circle cx="33" cy="39" r="9.500" fill="#3f86cf" />
          {:else if a === 'ji'}
            <path d="M12 17h22v28c0 14-11 18-22 16" fill="none" stroke="#41a8dc" stroke-width="10" stroke-linecap="round" /><path d="M53 17v44" stroke="#41a8dc" stroke-width="11" stroke-linecap="round" /><circle cx="14" cy="39" r="7.500" fill="#f58321" />
          {:else if a === 'activity'}
            <rect x="7" y="16" width="53" height="46" rx="2" fill="#0c0f0f" /><path d="M10 24h47M10 32h47M10 40h47M10 48h47M10 56h47M17 19v41M25 19v41M33 19v41M41 19v41M49 19v41" stroke="#1f4a42" stroke-width="1" /><path d="M10 42h13l3-3 3 5 1-22 3 32 3-14 3 3 4-6 4 8 3-3h6" fill="none" stroke="#4aa08d" stroke-width="1.400" />
          {:else if a === 'terminal'}
            <rect x="7" y="16" width="53" height="46" rx="2" fill="#0b0b0b" /><rect x="10" y="19" width="47" height="40" fill="#242424" /><text x="12" y="32" class="prompt">&gt;_</text>
          {:else if a === 'word'}
            <text x="6" y="63" class="office w" textLength="54" lengthAdjust="spacingAndGlyphs">W</text>
          {:else if a === 'excel'}
            <text x="11" y="65" class="office x" textLength="44" lengthAdjust="spacingAndGlyphs">X</text>
          {:else if a === 'ppt'}
            <text x="9" y="65" class="office p" textLength="48" lengthAdjust="spacingAndGlyphs">P</text>
          {:else if a === 'preview'}
            {@render photo(6, 14, 0.96)}
          {:else if a === 'xcode'}
            <path d="M4 24l46-9 8 42-46 9z" fill="#3ba3ea" /><path d="M17 56l12-32 16 26M14 46l32-7" stroke="#8fd0fa" stroke-width="2.200" fill="none" /><path d="M46 16h6l-8 48q-4 3-5-1z" fill="#2b2b2b" /><path d="M36 11q9-4 18 2l7 2-2 6-20-4z" fill="#cfd3d6" stroke="#888" />
          {:else if a === 'teamviewer'}
            <g transform="translate(1 2)">{@render teamviewer()}</g>
          {:else if a === 'simulator'}
            <path d="M5 26l44-10 7 42-44 8z" fill="#3ba3ea" /><path d="M17 57l12-31 14 26M14 48l30-7" stroke="#8fd0fa" stroke-width="2.200" fill="none" /><path d="M45 31l17-1-6 36-16-5z" fill="#161616" /><path d="M47 34l12-1-5 27-11-3z" fill="#333" />
          {:else}
            <rect x="2" y="8" width="62" height="62" fill="#1f2123" /><g transform="translate(3 8)">{@render logo('#fff')}</g>
          {/if}
          {#if running.has(a)}<circle cx="33" cy="77" r="3" class="dot" />{/if}
        </svg>
      {/each}
      <i class="divider"></i>
      {#each shelf as s}
        <svg class="app" viewBox="0 0 66 84">
          {#if s === 'doc'}
            <path d="M14 10h22l17 17v40H14z" fill="#fafafa" /><path d="M36 10q4 4 5 14 8-1 12 5z" fill="#cfcfcf" />
          {:else if s === 'mini'}
            {@render photo(42, 49, 0.34)}
          {:else if s === 'black'}
            <rect x="12" y="11" width="42" height="56" fill="#050505" /><g fill="#eee"><rect x="16" y="16" width="6" height="7" /><rect x="26" y="16" width="6" height="7" fill="#f5a02b" /><rect x="36" y="16" width="6" height="7" fill="#7bc86a" /><rect x="46" y="16" width="5" height="7" fill="#555" /><rect x="16" y="27" width="6" height="7" /><rect x="26" y="27" width="6" height="7" fill="#e5394b" /><rect x="36" y="27" width="6" height="7" fill="#d33" /><rect x="46" y="27" width="5" height="7" fill="#777" /></g><path d="M41 52l16-3 3 14-15 4z" fill="#3ba3ea" /><path d="M56 54l6-1-2 13-5-1z" fill="#111" />
          {:else if s === 'win1'}
            <rect x="4" y="17" width="58" height="44" fill="#fafafa" /><rect x="4" y="17" width="58" height="4" fill="#dcdcdc" /><path d="M20 30h26M20 36h26M20 50h26" stroke="#aaa" stroke-width="3" stroke-dasharray="4 2" />{@render photo(42, 49, 0.34)}
          {:else if s === 'win2'}
            <rect x="4" y="19" width="58" height="40" fill="#9aa6b4" /><rect x="4" y="19" width="58" height="6" fill="#dcdcdc" /><rect x="4" y="25" width="9" height="34" fill="#d4dae2" /><rect x="26" y="30" width="25" height="20" fill="#f8f8f2" /><text x="44" y="67" class="office p small">P</text>
          {:else if s === 'win3'}
            <rect x="4" y="21" width="58" height="36" fill="#fafafa" /><rect x="4" y="21" width="58" height="4" fill="#dcdcdc" /><rect x="21" y="35" width="24" height="19" fill="#d3d3d3" stroke="#aaa" />{@render photo(42, 49, 0.34)}
          {:else if s === 'win4'}
            <rect x="4" y="11" width="58" height="56" fill="#fbe9a0" /><rect x="4" y="11" width="58" height="16" fill="#f5f5f5" /><rect x="12" y="27" width="50" height="3" fill="#d05a26" /><path d="M14 35h10M30 35h26M14 42h10M30 42h26M14 49h10M30 49h22M14 56h10M30 56h14" stroke="#c8a654" stroke-width="2" />{@render photo(42, 49, 0.34)}
          {:else if s === 'win5'}
            <rect x="4" y="22" width="58" height="35" fill="#f7f7f9" /><rect x="9" y="24" width="48" height="3" fill="#4543a8" /><path d="M14 32h34M14 37h36M14 42h30M14 47h34M14 52h26" stroke="#9a9aa6" stroke-width="1.600" />{@render photo(42, 49, 0.34)}
          {:else if s === 'win6'}
            <rect x="4" y="14" width="58" height="50" fill="#fafafa" /><rect x="4" y="14" width="58" height="4" fill="#dcdcdc" /><rect x="4" y="30" width="58" height="2" fill="#ccc" /><path d="M16 38h28M12 44h20M12 49h24M12 54h16" stroke="#9a9a9a" stroke-width="1.600" />{@render photo(42, 49, 0.34)}
          {:else if s === 'win7'}
            <rect x="4" y="22" width="58" height="34" fill="#35383b" /><rect x="4" y="22" width="58" height="3" fill="#cfcfcf" /><path d="M8 30h10M24 30h20M24 35h16M24 40h22" stroke="#66716e" stroke-width="1.500" /><path d="M6 46h22M6 50h26" stroke="#b8443d" stroke-width="2" /><path d="M44 50h8v12q-3 4-10 3" fill="none" stroke="#41a8dc" stroke-width="4" /><path d="M59 48v18" stroke="#41a8dc" stroke-width="4" /><circle cx="45" cy="58" r="3" fill="#f58321" />
          {:else}
            <path d="M12 20l10-10 8 5 6-6 10 4 10 7z" fill="#e8e8e8" /><path d="M20 13l5 8M34 12l6 8M46 15l-5 6" stroke="#39475a" stroke-width="3" /><path d="M11 20h44l-5 44q-17 6-34 0z" fill="#e9e9ea" opacity=".92" /><ellipse cx="33" cy="21" rx="22" ry="4" fill="none" stroke="#fafafa" stroke-width="2" /><path d="M22 32l8 12-6 14M40 30l-6 16 8 12" fill="none" stroke="#d6d6d8" stroke-width="2" />
          {/if}
        </svg>
      {/each}
    </div>
  </div>
</div>

<style>
  :global(body) { margin: 0; overflow: hidden; }
  * { box-sizing: border-box; }
  .screen { width: 2880px; height: 1800px; display: flex; flex-direction: column; overflow: hidden; font-family: 'Open Sans', 'Noto Sans', sans-serif; font-size: 26px; letter-spacing: .3px; color: #000; background: #777; }
  svg { display: block; flex: none; }
  button { font: inherit; letter-spacing: inherit; color: inherit; margin: 0; padding: 0; border: 0; background: none; display: flex; align-items: center; justify-content: center; flex: none; white-space: nowrap; }
  .grow { flex: 1; }
  span, b { white-space: nowrap; }

  .menubar { height: 46px; flex: none; display: flex; align-items: center; padding: 0 46px 4px 42px; letter-spacing: 0; font-family: 'Liberation Sans', Arial, sans-serif; font-size: 28px; color: #3d2b2b; background: linear-gradient(90deg, #a58270, #91606a 40%, #84526a 70%, #564e78) bottom / 100% 2px no-repeat, linear-gradient(90deg, #fcefe4, #fde8e5 35%, #f5dfe1 65%, #eadfed); }
  .menubar > span, .menubar > b { padding-top: 3px; }
  .apple { width: 26px; height: 32px; margin-top: -3px; }
  .m-gephi { width: 113px; margin-left: 41px; }
  .m-file { width: 82px; }
  .m-ws { width: 182px; letter-spacing: .1px; }
  .m-view { width: 98px; }
  .m-tools { width: 107px; letter-spacing: .2px; }
  .m-win { width: 141px; }
  .m-plug { width: 135px; letter-spacing: .2px; }
  .tv { width: 27px; height: 32px; margin-right: 19px; }
  .wifi { width: 42px; height: 30px; margin-right: 26px; }
  .battery { width: 46px; height: 24px; margin-right: 24px; }
  .flag { width: 32px; height: 22px; margin-right: 26px; }
  .clock { width: 200px; color: #3d2b33; letter-spacing: .5px; }
  .user { width: 90px; color: #3d2b33; }
  .find { width: 30px; height: 30px; margin-right: 29px; }
  .list { width: 38px; height: 22px; }

  .titlewrap { flex: none; background: linear-gradient(90deg, #c09a80, #564e78); }
  .titlebar { height: 44px; display: grid; grid-template-columns: 300px 1fr 300px; align-items: center; border-radius: 10px 10px 0 0; background: linear-gradient(#ececec, #d2d2d2); font-family: 'Liberation Sans', Arial, sans-serif; font-size: 27px; color: #444; text-align: center; }
  .lights { display: flex; gap: 16px; padding-left: 16px; }
  .lights i { width: 24px; height: 24px; border-radius: 50%; border: 1px solid #0002; }
  .lights .r { background: #fc5b57; }
  .lights .y { background: #fdbc40; }
  .lights .g { background: #34c84a; }

  .banner { height: 92px; flex: none; display: flex; align-items: flex-start; gap: 42px; padding-left: 26px; border-bottom: 2px solid #3d3d3d; background: linear-gradient(90deg, #fff0, #fff 640px), repeating-linear-gradient(135deg, #fff 0 14px, #dedede 14.5px 16px, #fff 16.5px); }
  .view { width: 320px; height: 42px; margin-top: 26px; justify-content: flex-start; border: 2px solid #3d3d3d; background: linear-gradient(#dcdccd, #bdbdbd 45%, #bdbdbd); font-size: 22px; }
  .view.current { background: linear-gradient(#fdfdfd, #e8e8e8 50%, #e8e8e8); }
  .view svg { width: 34px; height: 34px; margin-left: 8px; }
  .view span { flex: 1; text-align: center; padding: 0 40px 3px 0; }
  .bigmark { width: 304px; height: 90px; }

  .work { height: 1484px; flex: none; display: grid; grid-template-columns: 574px 1776px 506px; gap: 6px; padding: 6px; background: #777; }
  .col { display: flex; flex-direction: column; gap: 6px; min-height: 0; }
  .panel { display: flex; flex-direction: column; background: #e7e7e7; overflow: hidden; flex: none; }
  .p1 { height: 586px; }
  .p2 { height: 880px; }
  .p3 { height: 210px; }
  .p4 { height: 1256px; }

  .strip { height: 42px; flex: none; display: flex; border-top: 2px solid #3d3d3d; font-size: 22px; }
  .tab { display: flex; align-items: center; justify-content: center; padding-bottom: 3px; letter-spacing: .2px; background: linear-gradient(#dcdccd, #bfbfbf 50%); border-bottom: 2px solid #3d3d3d; border-right: 2px solid #3d3d3d; }
  .tab.active { justify-content: flex-start; gap: 9px; padding: 0 10px 5px 12px; border-bottom: 0; background: linear-gradient(#fff, #e8e8e8 75%); }
  .strip .active { width: 148px; }
  .rank { width: 142px; }
  .fill { flex: 1; display: flex; align-items: center; justify-content: flex-end; padding-right: 9px; background: linear-gradient(#c8c8c8, #a9a9a9 50%); border-bottom: 2px solid #3d3d3d; }
  .plain { border-bottom: 2px solid #777; height: 42px; }
  .plain .fill { border-bottom: 0; padding-bottom: 2px; }
  .strip.plain .tab { border-bottom: 0; padding-bottom: 3px; }
  .plain .active { width: 130px; }
  .plain .ctx { width: 144px; }
  .strip .st { width: 154px; }
  .filt { width: 123px; }
  .close { width: 24px; height: 24px; margin-left: auto; margin-top: 3px; }
  .minimize { width: 34px; height: 34px; }

  .subtabs { height: 62px; flex: none; display: flex; align-items: center; border-bottom: 2px solid #777; font-size: 22px; }
  .sel { width: 95px; height: 60px; line-height: 57px; padding-left: 14px; background: linear-gradient(#e7e7e7, #bbb 50%, #e7e7e7); border-right: 1px solid #888; }
  .ed { padding-left: 16px; width: 103px; padding-bottom: 3px; }
  .vdots { width: 2px; height: 50px; flex: none; background: repeating-linear-gradient(#888 0 2px, #0000 2px 6px); }
  .wheel { width: 32px; height: 32px; margin-right: 14px; border-radius: 50%; background: radial-gradient(#fff, #fff0 60%), conic-gradient(#f9d84a, #ff6b5a, #f05bd0, #7b6bff, #45c8f5, #45e08a, #9be04a, #f9d84a); }
  .pick { height: 70px; flex: none; display: flex; align-items: flex-start; padding: 14px 21px 0 12px; gap: 27px; }
  .sq { width: 56px; height: 40px; margin-top: 2px; border: 2px solid #979797; background: linear-gradient(#fff, #e8e8e8 50%, #fafafa); }
  .sq svg { width: 34px; height: 34px; }
  .combo { flex: 1; height: 40px; display: flex; align-items: center; justify-content: space-between; padding: 0 13px 0 26px; border: 1.5px solid #8f8f8f; border-radius: 7px; background: linear-gradient(#fff, #f6f6f6 50%, #ebebeb 52%, #f3f3f3); box-shadow: 0 1px 2px #0004; }
  .combo span { padding-bottom: 2px; }
  .combo > .arrows:only-child { margin-left: auto; }
  .arrows { width: 10px; height: 22px; }
  .blank { height: 350px; flex: none; background: #fff; }
  .foot { display: flex; align-items: flex-start; height: 62px; padding: 5px 15px 0 24px; }
  .tree { width: 14px; height: 26px; margin-top: 10px; margin-right: 12px; }
  .piegray { width: 24px; height: 24px; margin: 12px 10px 0 26px; }
  .dis { font-size: 26px; line-height: 36px; margin-top: 4px; color: #a9a9a9; text-shadow: 1px 2px #fff; }
  .pietext { letter-spacing: -.3px; }
  .mac { border: 2px solid #848484; border-radius: 10px; background: linear-gradient(#fff, #f1f1f1 50%, #f4f4f4); box-shadow: 0 2px 4px #0006; font-size: 22px; }
  .apply { width: 173px; height: 43px; margin-left: auto; gap: 14px; padding-right: 2px; }
  .play { width: 18px; height: 28px; }

  .algo { flex: none; margin: 26px 21px 0 19px; }
  .runrow { height: 50px; flex: none; display: flex; align-items: center; justify-content: space-between; margin: 43px 15px 19px 14px; }
  .info { width: 28px; height: 28px; }
  .run { width: 140px; height: 50px; gap: 15px; padding-right: 3px; }
  .props { height: 468px; flex: none; margin: 0 10px; display: flex; border-bottom: 2px solid #1d6dd2; overflow: hidden; }
  .table { width: 524px; }
  .phead { height: 40px; display: flex; align-items: center; gap: 15px; padding: 0 0 5px 13px; background: linear-gradient(#fafafa, #e6e6e6 60%); }
  .phead i { border: 9px solid transparent; border-top: 15px solid #888; border-bottom: 0; margin-top: 4px; }
  .prow { height: 40px; display: grid; grid-template-columns: 260px 260px; gap: 2px; padding-bottom: 2px; }
  .prow > span { background: #fff; overflow: hidden; line-height: 36px; }
  .prow .val { padding-left: 8px; }
  .val .check { margin: 7px 0 0 7px; }
  .vscroll { width: 30px; background: linear-gradient(90deg, #dedede, #fafafa 30%, #eee); padding: 2px 7px; }
  .vscroll i { display: block; width: 16px; height: 358px; border-radius: 8px; background: #c3c3c3; }
  .desc { flex: none; height: 134px; margin: 14px 10px 0; border-top: 2px solid #979797; display: flex; justify-content: space-between; padding: 14px 12px 0 4px; line-height: 36px; letter-spacing: .4px; }
  .help { width: 40px; height: 40px; border-radius: 50%; border: 1.5px solid #b0b0b0; background: linear-gradient(#fff, #eee); text-align: center; line-height: 38px; font-size: 30px; font-weight: 600; color: #8a8a8a; }
  .presets { display: flex; align-items: center; padding-left: 8px; }
  .flat { border: 2px solid #979797; background: linear-gradient(#fbfbfb 12%, #e2e2e2 20%, #fafafa); font-size: 22px; }
  .pre { width: 152px; height: 40px; gap: 15px; padding-bottom: 2px; }
  .pre svg { width: 18px; height: 18px; margin-top: -16px; }
  .reset { width: 82px; height: 36px; padding-bottom: 2px; }

  .check { width: 26px; height: 26px; display: block; border: 1.5px solid #8f8f8f; border-radius: 6px; background: linear-gradient(#fff, #f3f3f3 50%, #ebebeb); box-shadow: 0 1px 2px #0003; flex: none; }
  .check.on { background: linear-gradient(#e8f3fc, #a9d2f5 55%, #c9e8fc); border-color: #5e7590; }
  .check svg { width: 34px; height: 36px; margin: -9px 0 0 -3px; }

  .graph { display: flex; flex-direction: column; background: #e7e7e7; min-width: 0; overflow: hidden; }
  .gtabs { height: 42px; flex: none; display: flex; font-size: 22px; background: #777; }
  .gtab { width: 140px; margin-top: 2px; border-top: 4px solid #8dc1f7; }
  .tab.gtab { padding: 0 10px 7px 16px; }
  .gfill { flex: 1; border-bottom: 2px solid #3d3d3d; display: flex; justify-content: flex-end; gap: 8px; padding-right: 2px; }
  .nav { display: flex; height: 30px; border: 1px solid #8a8a8a; }
  .nav i, .drop { width: 49px; background: linear-gradient(#a8a8a8, #989898); display: flex; align-items: center; justify-content: center; }
  .nav i + i { border-left: 1px solid #777; }
  .nav svg, .drop svg { width: 12px; height: 16px; }
  .drop { width: 37px; height: 30px; background: linear-gradient(#b9b9b9, #9a9a9a); border: 1px solid #666; }
  .modebar { height: 56px; flex: none; display: flex; align-items: center; font-size: 22px; letter-spacing: 0; }
  .mark { width: 68px; height: 56px; background: #fff; }
  .drag { flex: 1; padding-left: 16px; letter-spacing: -.3px; padding-bottom: 1px; }
  .hier { width: 190px; height: 56px; background: #fff; display: flex; align-items: center; gap: 11px; padding: 0 0 1px 28px; letter-spacing: .4px; }
  .bulb { width: 23px; height: 30px; }
  .stage { height: 960px; flex: none; display: flex; }
  .tools { width: 68px; display: flex; flex-direction: column; }
  .tool { height: 60px; width: 60px; margin-left: 4px; display: flex; align-items: center; justify-content: center; flex: none; }
  .tool svg { width: 31px; height: 31px; overflow: visible; }
  .held { background: linear-gradient(#e7e7e7, #b5b5b5 50%, #e7e7e7); border-left: 1px solid #999; border-right: 1px solid #999; }
  .hdots { height: 2px; width: 50px; margin: 10px 9px; flex: none; background: repeating-linear-gradient(90deg, #999 0 2px, #0000 2px 6px); }
  .boxes { margin: 8px 0 0 4px; width: 56px; display: flex; flex-direction: column; }
  .boxes .flat { width: 56px; height: 40px; border-bottom-width: 1px; border-top-width: 1px; }
  .boxes .flat:first-child { border-top-width: 2px; }
  .boxes .flat:last-child { border-bottom-width: 2px; }
  .boxes svg { width: 34px; height: 34px; }
  .swatchg { width: 25px; height: 25px; border: 3px solid #000; background: #a8a8a8; }
  .sizeb { font-size: 19px; font-weight: 600; color: #444; padding-bottom: 1px; letter-spacing: -.5px; }
  .serifA { font: bold 23px 'Liberation Serif', serif; fill: #333; }
  .qm { font: bold 17px 'Open Sans', sans-serif; fill: #333; }
  .canvas { width: 1708px; height: 960px; background: #fff; }
  .blue { fill: #2c7ab7; stroke: #163c5a; stroke-width: 20px; }
  .tan { fill: #c9ac6b; stroke: #655636; stroke-width: 9px; }
  .rose { fill: #df4039; stroke: #701f1c; stroke-width: 4.6px; }
  .red { fill: #da352e; stroke: #6d1a17; stroke-width: 4.6px; }
  .deep { fill: #d7191c; stroke: #6b0c0e; stroke-width: 4.6px; }
  .label { font: bold 14px 'Liberation Sans', Arial, sans-serif; letter-spacing: 0; fill: #000; fill-opacity: .8; }
  .weight { font: bold 13px 'Liberation Sans', Arial, sans-serif; letter-spacing: 0; fill: #1c4c94; fill-opacity: .85; }

  .bottombar { height: 84px; flex: none; display: flex; align-items: center; padding: 0 19px 16px 10px; border-bottom: 2px solid #dedede; }
  .d1 { margin-right: 10px; }
  .d2 { margin: 0 10px; }
  .d3 { margin: 0 10px 0 11px; }
  .d4 { margin: 0 10px 0 38px; }
  .b56 { width: 56px; height: 40px; }
  .cam { width: 78px; height: 40px; margin-left: 0; }
  .cam svg { width: 60px; height: 34px; }
  .tog { width: 60px; height: 60px; display: flex; align-items: center; justify-content: center; background: linear-gradient(#e7e7e7, #bdbdbd 50%, #e7e7e7); border-right: 2px solid #aaa; }
  .tog svg { width: 34px; height: 34px; }
  .bigT { font: bold 38px 'Liberation Serif', serif; }
  .dark { fill: #3a3a40; stroke: #3a3a40; stroke-width: 1.5px; }
  .light { fill: #f4f4f4; stroke: #8a8a8a; stroke-width: 1.5px; }
  .dropA { font: bold 29px 'Liberation Serif', serif; fill: #444; }
  .blue2 { fill: #4b7cd6; }
  .b56 svg:not(.bulb):not(.clip) { width: 40px; height: 34px; }
  .fontb { width: 190px; height: 36px; letter-spacing: .65px; }
  .slider { height: 11px; border-radius: 5px; border: 1.5px solid #8a8a8a; background: linear-gradient(#9a9a9a, #cfcfcf); display: flex; align-items: center; flex: none; }
  .slider i { width: 31px; height: 31px; flex: none; border-radius: 50%; border: 1.5px solid #999; background: linear-gradient(#fff, #efefef); box-shadow: 0 1px 2px #0004; }
  .s1 { width: 144px; margin-left: 27px; padding-left: 2px; }
  .s2 { width: 144px; margin-left: 28px; padding-left: 2px; }
  .black { width: 32px; height: 32px; margin-left: 28px; background: #000; }
  .clip { width: 34px; height: 34px; }
  .pen { width: 20px; height: 20px; }

  .labels { height: 330px; flex: none; display: flex; flex-direction: column; }
  .seg { width: 488px; height: 40px; margin: 33px 0 0 689px; display: grid; grid-template-columns: 119px 126px 120px 123px; align-items: center; text-align: center; border: 1.5px solid #808080; border-radius: 8px; background: linear-gradient(#fff, #f6f6f6 50%, #ececec 52%, #f3f3f3); box-shadow: 0 1px 2px #0004; position: relative; overflow: hidden; flex: none; }
  .seg span { line-height: 27px; height: 30px; }
  .seg span:first-child { padding-right: 3px; }
  .seg span + span { border-left: 1px solid #bbb; }
  .seg .on { height: 40px; line-height: 36px; background: linear-gradient(#808080, #a0a0a0); color: #fff; text-shadow: 0 2px 1px #555; }
  .group { height: 251px; margin: -17px 0 0 17px; border: 2px solid #bfbfbf; border-right: 0; border-radius: 7px 0 0 7px; background: linear-gradient(#dedede 33px, #e7e7e7 33px); display: grid; grid-template-columns: 648px 654px 328px 1fr; flex: none; }
  .half { padding: 50px 0 0 15px; }
  .toggle { display: flex; align-items: center; gap: 12px; height: 26px; line-height: 20px; }
  .frow { display: flex; align-items: center; height: 46px; margin-top: 23px; padding-left: 42px; }
  .node .k { width: 89px; }
  .edge .k { width: 89px; }
  .edge { padding-left: 17px; }
  .edge .frow { margin-top: 21px; padding-left: 33px; }
  .edge .srow { padding-left: 33px; }
  .frow span { padding-bottom: 4px; }
  .mac2 { width: 260px; height: 40px; padding-bottom: 2px; letter-spacing: .9px; border: 1.5px solid #8f8f8f; border-radius: 7px; background: linear-gradient(#fff, #f6f6f6 50%, #ebebeb 52%, #f3f3f3); box-shadow: 0 1px 2px #0004; }
  .k2 { margin-left: 58px; width: 106px; }
  .sw { width: 42px; height: 46px; }
  .sw i { width: 25px; height: 25px; border: 2px solid #000; background: #000; }
  .sw .navy { background: #1d4f91; }
  .srow { display: flex; align-items: center; height: 36px; margin-top: 36px; padding-left: 42px; }
  .long { width: 410px; margin-left: 33px; padding-left: 39px; }
  .lo2 { padding-left: 31px; }
  .opts { padding: 50px 0 0 17px; }
  .orow { display: flex; align-items: center; height: 40px; }
  .orow > span { width: 105px; padding-bottom: 4px; }
  .o2 { margin-top: 26px; }
  .sm { flex: none; width: 180px; }
  .hide { display: flex; align-items: center; gap: 13px; margin-top: 38px; height: 26px; line-height: 22px; letter-spacing: 1px; }
  .conf { display: flex; height: 34px; align-items: center; gap: 5px; margin-top: 73px; padding-left: 17px; font-size: 19px; letter-spacing: 0; overflow: hidden; }

  .context { height: 168px; display: flex; justify-content: space-between; padding: 8px 20px 0 14px; }
  dl { margin: 0; }
  dl div { display: flex; gap: 17px; height: 44px; line-height: 44px; }
  dl div:last-child { letter-spacing: .1px; }
  dt { font-weight: 700; }
  dd { margin: 0; }
  .pie { width: 34px; height: 34px; margin-top: 8px; }
  .setrow { height: 38px; flex: none; border-bottom: 2px solid #777; }
  .setrow .flat { width: 110px; height: 36px; padding-bottom: 2px; }
  .stats { height: 1146px; flex: none; background: #fff; padding-top: 20px; }
  .shead { height: 40px; display: flex; align-items: center; gap: 11px; padding: 0 0 0 10px; font-weight: 700; letter-spacing: .5px; border-top: 2px solid #dde5f2; border-bottom: 2px solid #dde5f2; background: #f8f8f8; }
  .shead svg { width: 18px; height: 18px; }
  .slist { padding: 4px 0 12px; display: flex; flex-direction: column; gap: 16px; }
  .srow2 { height: 40px; display: grid; grid-template-columns: 1fr auto 66px; align-items: center; padding: 0 2px 0 8px; }
  .srow2 > span { height: 36px; line-height: 35px; }
  .srow2 .wide { letter-spacing: .75px; }
  .srow2 .v { padding-right: 14px; }
  .srow2 .flat { height: 40px; padding-bottom: 1px; }
  .hscroll { height: 30px; padding: 7px 3px; background: linear-gradient(#e8e8e8, #fafafa); }
  .hscroll i { display: block; width: 446px; height: 16px; border-radius: 8px; background: #c3c3c3; }

  .status { height: 50px; flex: none; display: flex; align-items: flex-start; justify-content: flex-end; padding: 8px 56px 0 0; border-top: 2px solid #3d3d3d; background: linear-gradient(#b5b5b5 2px, #d0d0d0 3px, #c2c2c2 95%, #aaa); font-size: 22px; line-height: 30px; letter-spacing: -.55px; }
  .sheet { width: 30px; height: 26px; margin: 3px 14px 0 0; background: #efefef; border-radius: 3px; box-shadow: 0 2px 3px #0003; }
  .wnav { display: flex; margin: 3px 0 0 14px; }
  .wnav i { width: 44px; height: 26px; display: flex; align-items: center; justify-content: center; border: 2px solid #ababab; background: #d2d2d2; }
  .wnav svg { width: 13px; height: 17px; }
  .desktop { height: 84px; flex: none; padding: 0 47px 0 48px; background: linear-gradient(90deg, #55505a, #2c2b35 20px, #3b3944 48px, #888 2830px, #8f8f8f 2834px, #c4c4c4); }
  .dock { height: 84px; display: flex; padding-left: 6px; border-radius: 10px 10px 0 0; background: linear-gradient(90deg, #76747e, #6b6c76 150px, #6b6c76 220px, #9d9ca3 350px, #bbb9bf 470px, #c5c3c8 700px, #c3c2c6); }
  .app { width: 65.33px; height: 84px; overflow: visible; }
  .dot { fill: #333; }
  .divider { width: 2px; height: 60px; margin: 12px 12px 0 15px; flex: none; background: #8d8b90; }
  .mar { font: 13px 'Liberation Sans', sans-serif; fill: #fff; }
  .four { font: 27px 'Liberation Sans', sans-serif; fill: #222; }
  .tiny { font: 10px 'Liberation Sans', sans-serif; fill: #444; }
  .badge { font: 17px 'Liberation Sans', sans-serif; fill: #fff; }
  .prompt { font: bold 15px 'Liberation Mono', monospace; fill: #fff; }
  .office { font: 800 70px 'Open Sans', sans-serif; letter-spacing: 0; }
  .w { fill: #2191d4; }
  .x { fill: #49a942; }
  .p { fill: #e8501f; }
  .small { font-size: 24px; }
</style>
